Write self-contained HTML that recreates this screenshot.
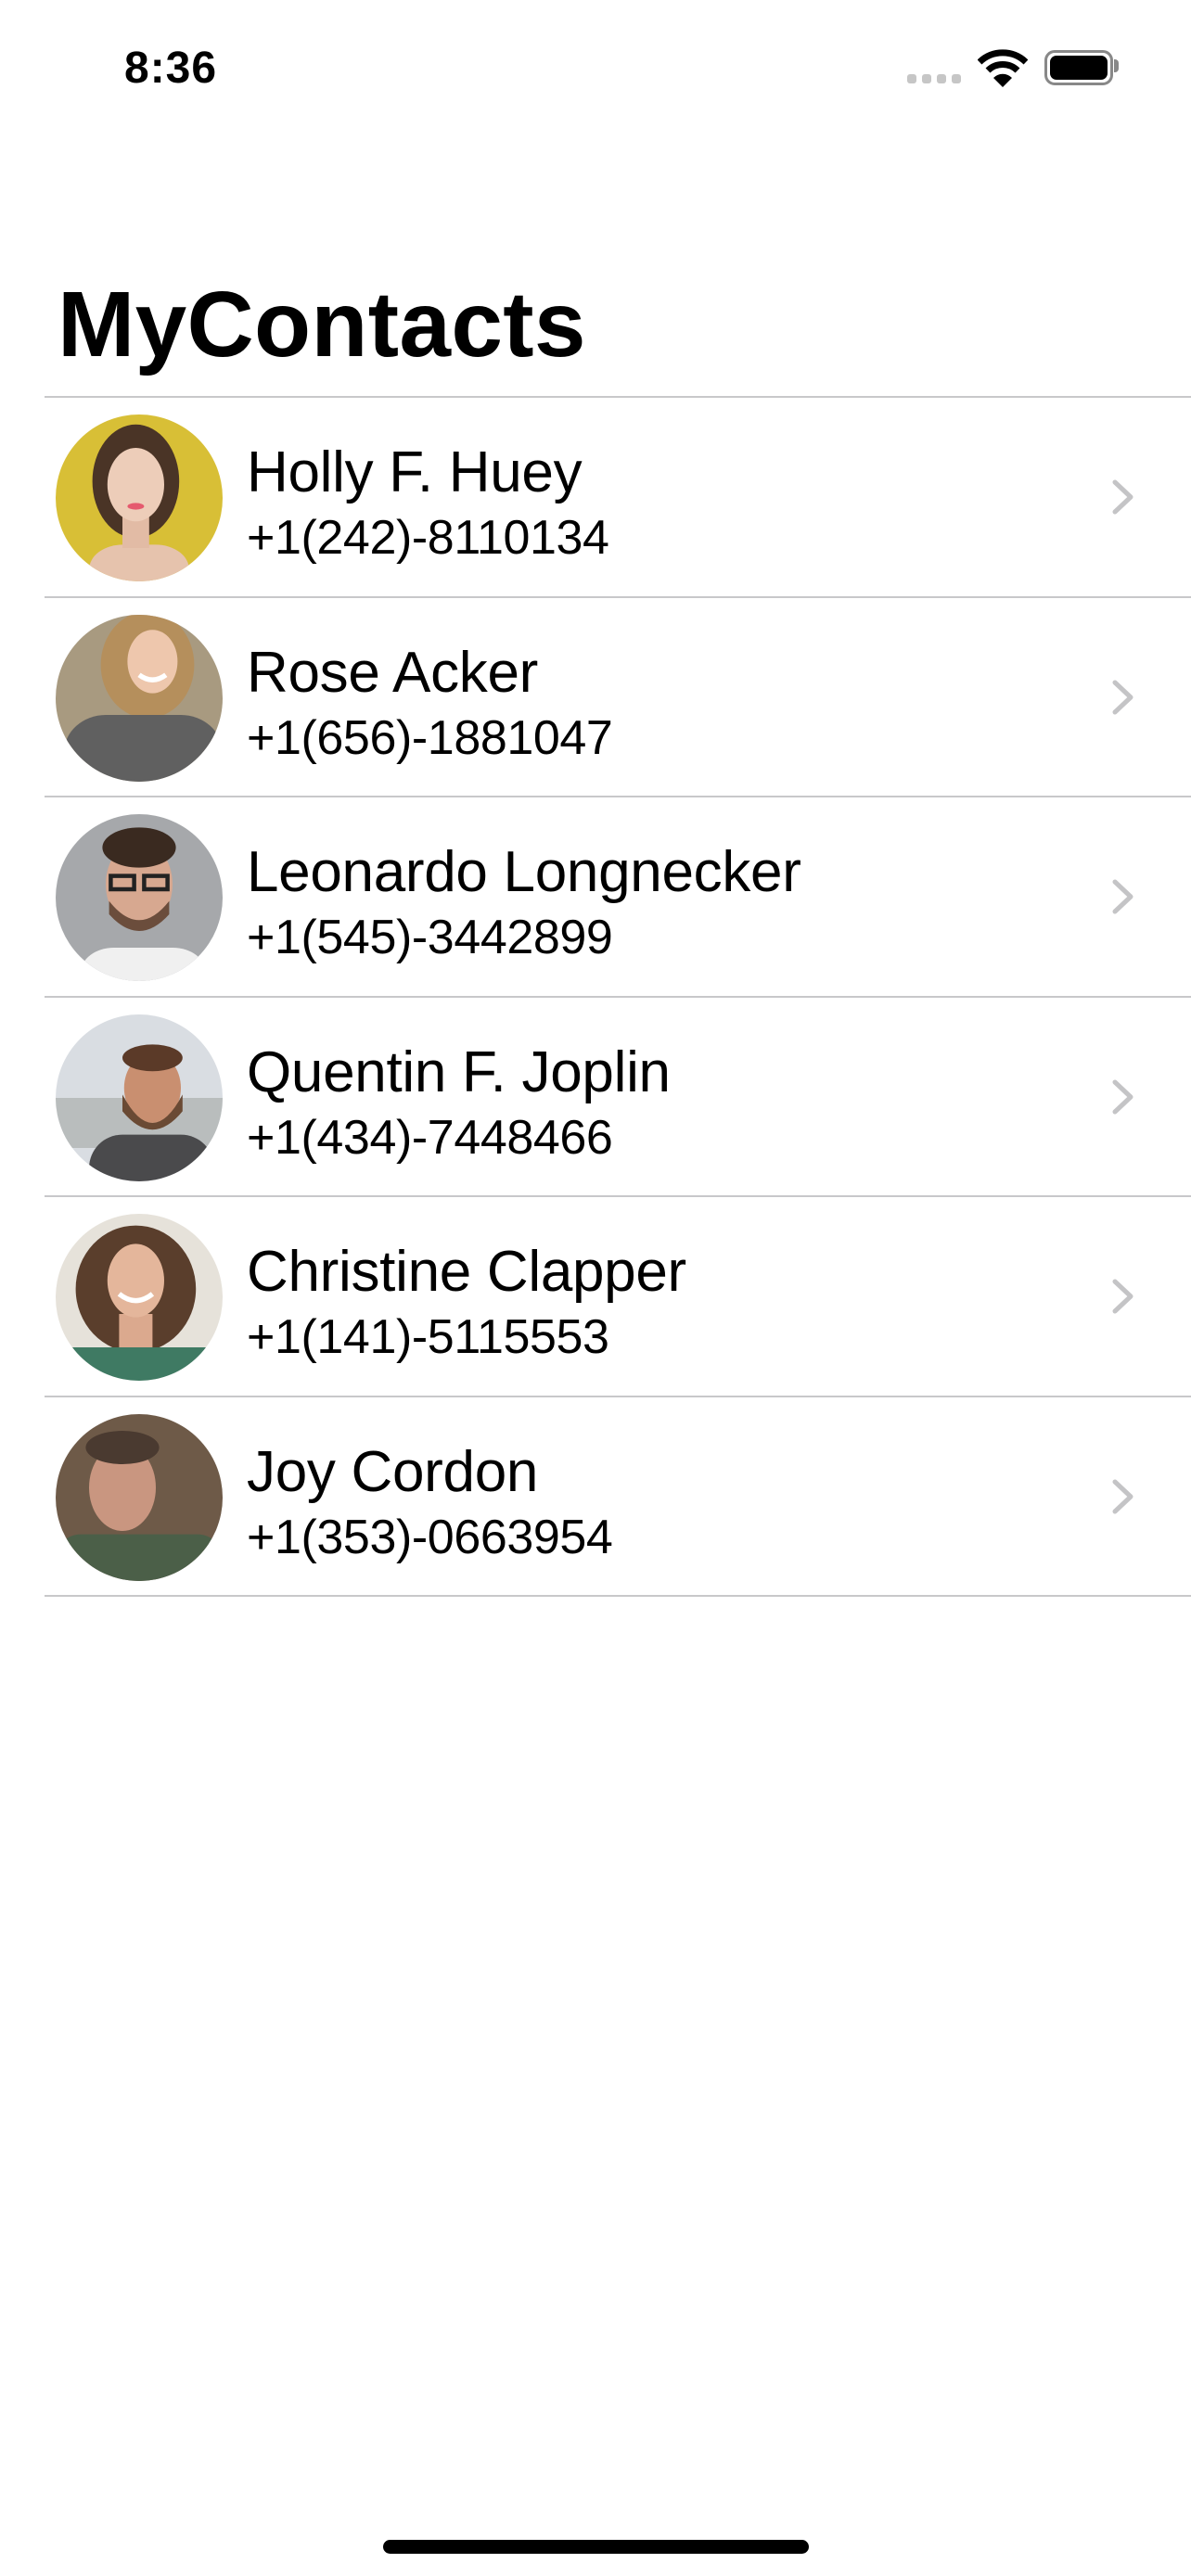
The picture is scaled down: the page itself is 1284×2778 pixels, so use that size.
<!DOCTYPE html>
<html><head><meta charset="utf-8"><style>
html,body{margin:0;padding:0;background:#fff;}
body{width:1284px;height:2778px;position:relative;overflow:hidden;font-family:"Liberation Sans",sans-serif;color:#000;}
.abs{position:absolute;}
.sep{position:absolute;left:48px;right:0;height:2px;background:#c8c8ca;}
.av{position:absolute;left:60px;width:180px;height:180px;border-radius:50%;overflow:hidden;}
.name{position:absolute;left:266px;font-size:62px;letter-spacing:-0.3px;line-height:1;white-space:nowrap;}
.ph{position:absolute;left:266px;font-size:52px;letter-spacing:-0.4px;line-height:1;white-space:nowrap;}
.chev{position:absolute;left:1198px;width:26px;height:38px;}
</style></head><body>
<div class="abs" style="left:134px;top:50px;font-size:48px;font-weight:bold;letter-spacing:1px;line-height:1;">8:36</div>
<div class="abs" style="left:978px;top:80px;width:10px;height:10px;border-radius:3px;background:#c6c6c6"></div>
<div class="abs" style="left:994px;top:80px;width:10px;height:10px;border-radius:3px;background:#c6c6c6"></div>
<div class="abs" style="left:1010px;top:80px;width:10px;height:10px;border-radius:3px;background:#c6c6c6"></div>
<div class="abs" style="left:1026px;top:80px;width:10px;height:10px;border-radius:3px;background:#c6c6c6"></div>
<svg class="abs" style="left:1054px;top:52px" width="54" height="42" viewBox="0 0 54 42">
<path d="M2 15 A36 36 0 0 1 52 15" fill="none" stroke="#000" stroke-width="7"/>
<path d="M11 24 A23 23 0 0 1 43 24" fill="none" stroke="#000" stroke-width="7"/>
<path d="M17 32 L27 42 L37 32 A14 14 0 0 0 17 32Z" fill="#000"/>
</svg>
<div class="abs" style="left:1126px;top:54px;width:68px;height:32px;border:3px solid #888;border-radius:11px;"></div>
<div class="abs" style="left:1132px;top:60px;width:62px;height:26px;background:#000;border-radius:7px;"></div>
<div class="abs" style="left:1201px;top:64px;width:5px;height:14px;background:#888;border-radius:0 4px 4px 0;"></div>

<div class="abs" style="left:62px;top:300px;font-size:100px;font-weight:bold;line-height:1;letter-spacing:0.3px;">MyContacts</div>

<div class="sep" style="top:427px"></div>
<div class="sep" style="top:643px"></div>
<div class="sep" style="top:858px"></div>
<div class="sep" style="top:1074px"></div>
<div class="sep" style="top:1289px"></div>
<div class="sep" style="top:1505px"></div>
<div class="sep" style="top:1720px"></div>

<!-- row 1 -->
<svg class="av" style="top:447px" viewBox="0 0 100 100"><rect width="100" height="100" fill="#d8bf36"/><ellipse cx="48" cy="40" rx="26" ry="34" fill="#4a3426"/><rect x="20" y="78" width="60" height="30" rx="20" fill="#e6c3ad"/><rect x="40" y="55" width="16" height="25" fill="#e2bba5"/><ellipse cx="48" cy="42" rx="17" ry="22" fill="#edcdb9"/><ellipse cx="48" cy="55" rx="5" ry="2" fill="#e55a6e"/></svg>
<div class="name" style="top:479px">Holly F. Huey</div>
<div class="ph" style="top:554px">+1(242)-8110134</div>
<svg class="chev" style="top:517px" viewBox="0 0 26 38"><path d="M4 3 L21 19 L4 35" fill="none" stroke="#c4c4c6" stroke-width="5" stroke-linecap="round" stroke-linejoin="round"/></svg>

<!-- row 2 -->
<svg class="av" style="top:663px" viewBox="0 0 100 100"><rect width="100" height="100" fill="#a89a80"/><ellipse cx="55" cy="30" rx="28" ry="32" fill="#b58f5c"/><rect x="5" y="60" width="95" height="45" rx="25" fill="#606060"/><ellipse cx="58" cy="28" rx="15" ry="19" fill="#eec7ad"/><path d="M50 36 Q58 42 66 36" stroke="#fff" stroke-width="3" fill="none"/></svg>
<div class="name" style="top:695px">Rose Acker</div>
<div class="ph" style="top:770px">+1(656)-1881047</div>
<svg class="chev" style="top:733px" viewBox="0 0 26 38"><path d="M4 3 L21 19 L4 35" fill="none" stroke="#c4c4c6" stroke-width="5" stroke-linecap="round" stroke-linejoin="round"/></svg>

<!-- row 3 -->
<svg class="av" style="top:878px" viewBox="0 0 100 100"><rect width="100" height="100" fill="#a6a8ab"/><rect x="15" y="80" width="75" height="30" rx="20" fill="#f0f0f0"/><ellipse cx="50" cy="42" rx="20" ry="26" fill="#d7a890"/><ellipse cx="50" cy="20" rx="22" ry="12" fill="#3a2a20"/><path d="M32 52 Q50 75 68 52 L68 60 Q50 80 32 60Z" fill="#6b4d3c"/><rect x="33" y="37" width="14" height="8" fill="none" stroke="#222" stroke-width="2.5"/><rect x="53" y="37" width="14" height="8" fill="none" stroke="#222" stroke-width="2.5"/></svg>
<div class="name" style="top:910px">Leonardo Longnecker</div>
<div class="ph" style="top:985px">+1(545)-3442899</div>
<svg class="chev" style="top:948px" viewBox="0 0 26 38"><path d="M4 3 L21 19 L4 35" fill="none" stroke="#c4c4c6" stroke-width="5" stroke-linecap="round" stroke-linejoin="round"/></svg>

<!-- row 4 -->
<svg class="av" style="top:1094px" viewBox="0 0 100 100"><rect width="100" height="100" fill="#d9dde2"/><rect y="50" width="100" height="30" fill="#b9bdbd"/><rect x="20" y="72" width="75" height="40" rx="20" fill="#4a4a4c"/><ellipse cx="58" cy="44" rx="17" ry="21" fill="#c98f70"/><path d="M40 48 Q58 82 76 48 L76 58 Q58 80 40 58Z" fill="#6a4a34"/><ellipse cx="58" cy="26" rx="18" ry="8" fill="#5b3a28"/></svg>
<div class="name" style="top:1126px">Quentin F. Joplin</div>
<div class="ph" style="top:1201px">+1(434)-7448466</div>
<svg class="chev" style="top:1164px" viewBox="0 0 26 38"><path d="M4 3 L21 19 L4 35" fill="none" stroke="#c4c4c6" stroke-width="5" stroke-linecap="round" stroke-linejoin="round"/></svg>

<!-- row 5 -->
<svg class="av" style="top:1309px" viewBox="0 0 100 100"><rect width="100" height="100" fill="#e6e2da"/><ellipse cx="48" cy="45" rx="36" ry="38" fill="#5a3e2c"/><rect x="10" y="80" width="80" height="30" fill="#3f7a63"/><rect x="38" y="60" width="20" height="20" fill="#dba98e"/><ellipse cx="48" cy="40" rx="17" ry="22" fill="#e4b69b"/><path d="M38 48 Q48 56 58 48" stroke="#fff" stroke-width="3" fill="none"/></svg>
<div class="name" style="top:1341px">Christine Clapper</div>
<div class="ph" style="top:1416px">+1(141)-5115553</div>
<svg class="chev" style="top:1379px" viewBox="0 0 26 38"><path d="M4 3 L21 19 L4 35" fill="none" stroke="#c4c4c6" stroke-width="5" stroke-linecap="round" stroke-linejoin="round"/></svg>

<!-- row 6 -->
<svg class="av" style="top:1525px" viewBox="0 0 100 100"><rect width="100" height="100" fill="#6e5a48"/><rect x="0" y="72" width="100" height="40" rx="15" fill="#4b5f48"/><ellipse cx="40" cy="44" rx="20" ry="26" fill="#c99680"/><ellipse cx="40" cy="20" rx="22" ry="10" fill="#4a3a30"/></svg>
<div class="name" style="top:1557px">Joy Cordon</div>
<div class="ph" style="top:1632px">+1(353)-0663954</div>
<svg class="chev" style="top:1595px" viewBox="0 0 26 38"><path d="M4 3 L21 19 L4 35" fill="none" stroke="#c4c4c6" stroke-width="5" stroke-linecap="round" stroke-linejoin="round"/></svg>

<div class="abs" style="left:413px;top:2739px;width:459px;height:15px;border-radius:8px;background:#000"></div>
</body></html>
